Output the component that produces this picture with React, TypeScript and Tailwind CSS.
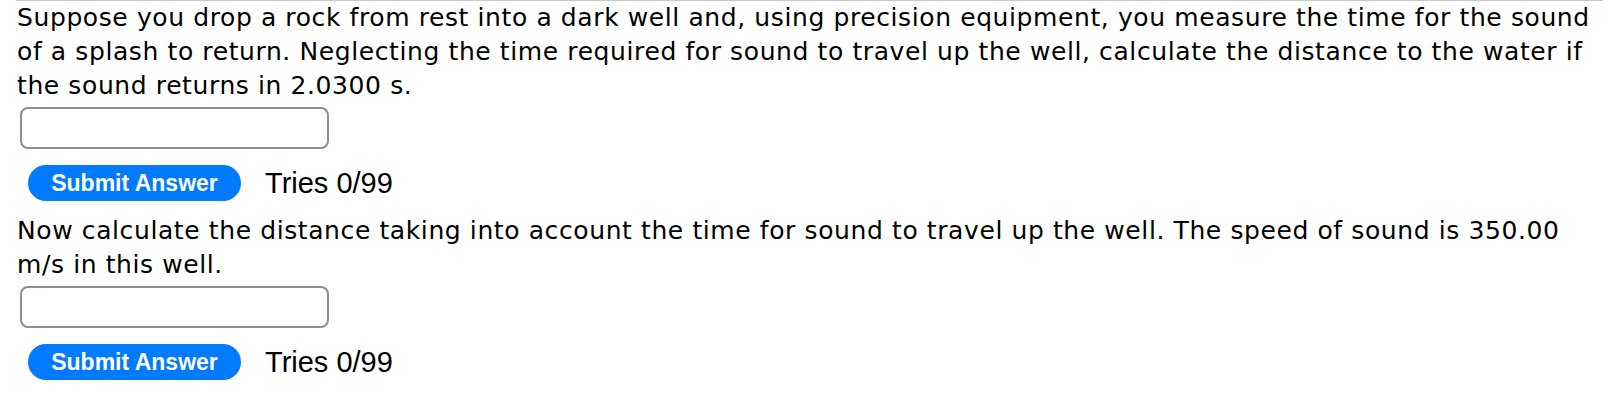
export default function App() {
  const Block = ({ text }: { text: string }) => (
    <div>
      <p className="pl-[1px] text-[25px] leading-[34px] tracking-[0.6px] text-black">
        {text}
      </p>
      <div className="mt-[4px] ml-[4px] h-[42px] w-[309px] rounded-[8px] border-2 border-[#8e8e93] bg-white" />
      <div className="mt-[16px] flex items-center">
        <button className="ml-[12px] flex h-[36px] w-[213px] items-center justify-center rounded-full bg-[#007aff] text-[23px] font-bold text-white [font-family:'Liberation_Sans',Arial,sans-serif]">
          Submit Answer
        </button>
        <span className="ml-[24px] text-[29px] leading-[36px] text-black [font-family:'Liberation_Sans',Arial,sans-serif]">
          Tries 0/99
        </span>
      </div>
    </div>
  );
  return (
    <div className="min-h-[407px] w-[1620px] bg-white">
      <div className="ml-[16px] w-[1587px] border-t border-[#c8c8c8] [font-family:'DejaVu_Sans',Verdana,sans-serif]">
        <Block text="Suppose you drop a rock from rest into a dark well and, using precision equipment, you measure the time for the sound of a splash to return. Neglecting the time required for sound to travel up the well, calculate the distance to the water if the sound returns in 2.0300 s." />
        <div className="mt-[13px]">
          <Block text="Now calculate the distance taking into account the time for sound to travel up the well. The speed of sound is 350.00 m/s in this well." />
        </div>
      </div>
    </div>
  );
}
